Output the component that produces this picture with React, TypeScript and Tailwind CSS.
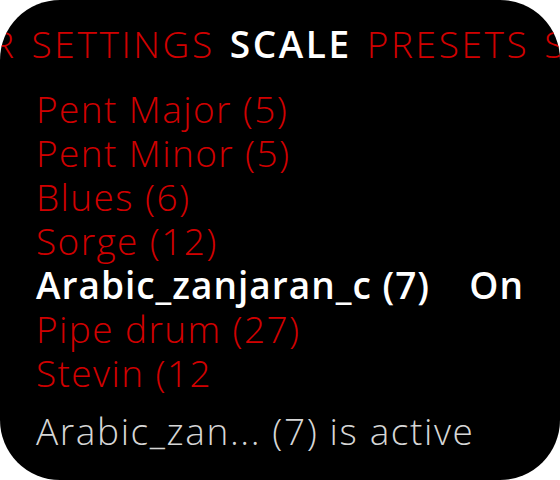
import React from "react";

const scales = [
  { name: "Pent Major (5)" },
  { name: "Pent Minor (5)" },
  { name: "Blues (6)" },
  { name: "Sorge (12)" },
  { name: "Arabic_zanjaran_c (7)", active: true },
  { name: "Pipe drum (27)" },
  { name: "Stevin (12" },
];

const tabs = [
  { label: "R", active: false },
  { label: "SETTINGS", active: false },
  { label: "SCALE", active: true },
  { label: "PRESETS", active: false },
  { label: "S", active: false },
];

export default function App() {
  return (
    <div className="w-[560px] h-[480px] bg-white">
      <div
        className="w-full h-full bg-black rounded-[60px] overflow-hidden flex flex-col"
        style={{ fontFamily: "'Open Sans', 'Noto Sans', sans-serif" }}
      >
        {/* scrolled tab strip */}
        <div className="flex items-baseline gap-[15px] whitespace-nowrap pt-[22px] ml-[-8px] text-[37px] leading-[44px] tracking-[2.6px]">
          {tabs.map((t, i) => (
            <span key={i} className={t.active ? "text-white font-semibold" : "text-[#d10000] font-light"}>
              {t.label}
            </span>
          ))}
        </div>

        <ul className="mt-[21px] pl-[36px] text-[37px] leading-[44px]">
          {scales.map((s) => (
            <li
              key={s.name}
              className={
                s.active
                  ? "flex text-white font-semibold tracking-[1px]"
                  : "text-[#d10000] font-light tracking-[1.4px]"
              }
            >
              <span>{s.name}</span>
              {s.active && <span className="ml-auto mr-[36px]">On</span>}
            </li>
          ))}
        </ul>

        <div className="mt-[14px] pl-[36px] text-[37px] leading-[44px] tracking-[1.6px] text-[#d6d6d6] font-light">
          Arabic_zan... (7) is active
        </div>
      </div>
    </div>
  );
}
